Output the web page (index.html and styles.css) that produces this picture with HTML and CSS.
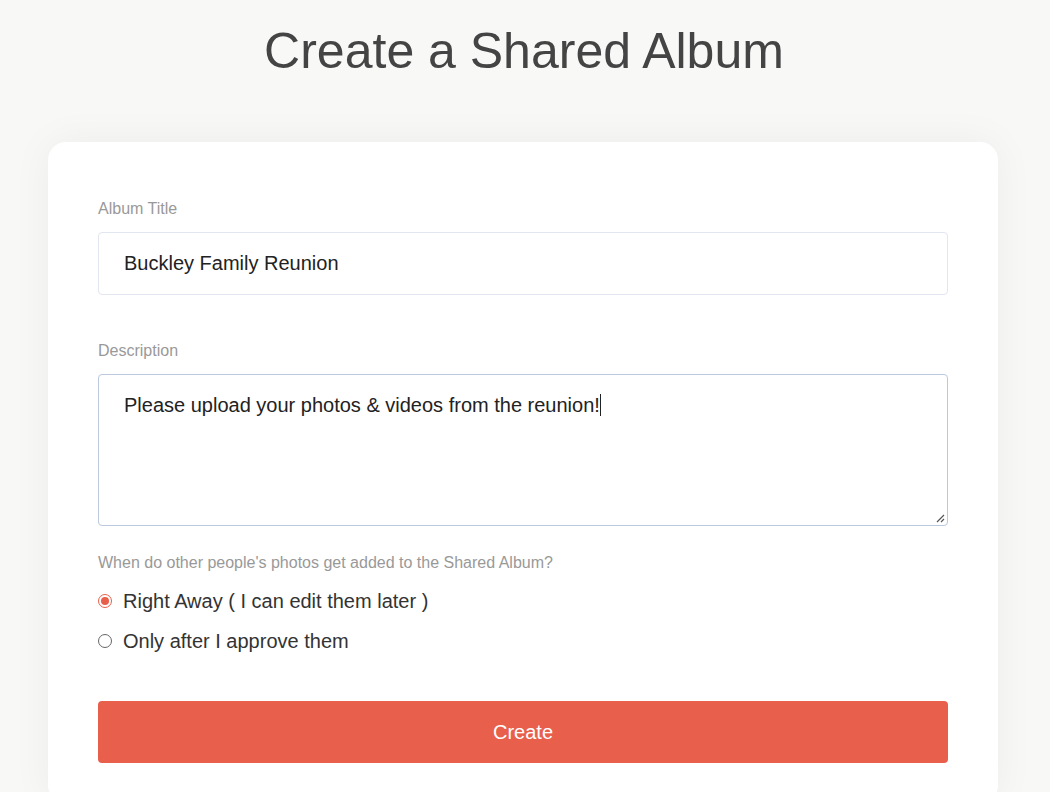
FILE: index.html
```html
<!DOCTYPE html>
<html>
<head>
<meta charset="utf-8">
<link rel="stylesheet" href="styles.css">
</head>
<body>
<h1 class="page-title">Create a Shared Album</h1>
<div class="card">
  <div class="field">
    <label class="field-label">Album Title</label>
    <div class="text-input">Buckley Family Reunion</div>
  </div>
  <div class="field field-desc">
    <label class="field-label">Description</label>
    <div class="text-area">Please upload your photos &amp; videos from the reunion!<span class="caret"></span>
      <svg class="grip" width="9" height="9" viewBox="0 0 9 9"><path d="M8 1L1 8M8 5L5 8" stroke="#555" stroke-width="1.2" fill="none"/></svg>
    </div>
  </div>
  <div class="question">When do other people's photos get added to the Shared Album?</div>
  <div class="radios">
    <div class="radio-row"><span class="radio checked"></span><span>Right Away ( I can edit them later )</span></div>
    <div class="radio-row"><span class="radio"></span><span>Only after I approve them</span></div>
  </div>
  <button class="create-btn">Create</button>
</div>
</body>
</html>
```
FILE: styles.css
```css
html, body {
  margin: 0;
  padding: 0;
  background: #f8f8f6;
  font-family: "Liberation Sans", Arial, sans-serif;
  height: 792px;
  overflow: hidden;
}
.page-title {
  margin: 22px 0 0 -2px;
  text-align: center;
  font-weight: normal;
  font-size: 50px;
  line-height: 58px;
  color: #444;
}
.card {
  margin: 62px 52px 0 48px;
  background: #fff;
  border-radius: 18px;
  box-shadow: 0 0 40px rgba(0,0,0,0.05);
  padding: 58px 50px 40px;
  display: flex;
  flex-direction: column;
}
.field {
  display: flex;
  flex-direction: column;
}
.field-desc {
  margin-top: 47px;
}
.field-label {
  font-size: 16px;
  line-height: 18px;
  color: #999;
  margin-bottom: 14px;
}
.text-input {
  border: 1px solid #e2e6f0;
  border-radius: 4px;
  box-sizing: border-box;
  height: 63px;
  padding: 0 25px;
  display: flex;
  align-items: center;
  font-size: 20px;
  color: #222;
}
.text-area {
  position: relative;
  height: 152px;
  box-sizing: border-box;
  border: 1px solid #bcc8de;
  border-radius: 4px;
  padding: 18px 25px;
  font-size: 20px;
  line-height: 24px;
  color: #222;
}
.caret {
  display: inline-block;
  width: 1px;
  height: 22px;
  background: #222;
  vertical-align: -4px;
}
.grip {
  position: absolute;
  right: 2px;
  bottom: 2px;
}
.question {
  margin-top: 28px;
  font-size: 16px;
  line-height: 18px;
  color: #999;
}
.radios {
  margin-top: 18px;
  display: flex;
  flex-direction: column;
  gap: 17px;
}
.radio-row {
  display: flex;
  align-items: center;
  gap: 11px;
  font-size: 20px;
  line-height: 23px;
  color: #333;
}
.radio {
  width: 14px;
  height: 14px;
  border: 1px solid #666;
  border-radius: 50%;
  box-sizing: border-box;
  background: #fff;
  position: relative;
  top: -1px;
}
.radio.checked {
  border: 1px solid #e8604c;
}
.radio.checked::after {
  content: "";
  position: absolute;
  left: 2px;
  top: 2px;
  width: 8px;
  height: 8px;
  border-radius: 50%;
  background: #e8604c;
}
.create-btn {
  margin-top: 48px;
  height: 62px;
  border: none;
  border-radius: 4px;
  background: #e8604c;
  color: #fff;
  font-family: "Liberation Sans", Arial, sans-serif;
  font-size: 20px;
}
```
